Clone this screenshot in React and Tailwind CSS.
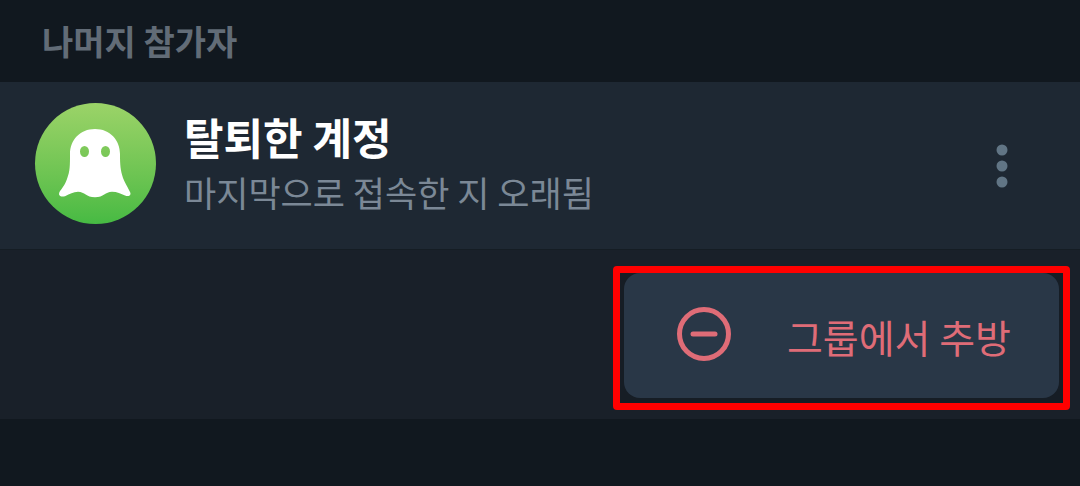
function GhostAvatar() {
  return (
    <div className="w-[121px] h-[121px] rounded-full flex items-center justify-center shrink-0 bg-linear-to-b from-[#9bd368] to-[#46ba43]">
      <svg viewBox="0 0 121 121" className="w-full h-full" aria-hidden="true">
        <path
          fill="#fff"
          fillRule="evenodd"
          d="M60 26C45 26 35 37 35 51C35 63 35 68 32 76C30 82 27 85 24.500 89C23 92.500 25.500 94.500 30 93.200C35 91 38 88.800 43 88.800C50 89 51 94.300 60 94.300C69 94.300 70 89 77 88.800C82 88.800 86 91 90 92.500C94.500 94 96.500 92 95 89C92 83 89.500 79 88 75C85.500 67 85 62 85 51C85 37 75 26 60 26ZM49.500 43A4.500 5.500 0 1 1 49.500 54A4.500 5.500 0 1 1 49.500 43ZM70.500 43A4.500 5.500 0 1 1 70.500 54A4.500 5.500 0 1 1 70.500 43Z"
        />
      </svg>
    </div>
  )
}

function MemberRow({ name, status }) {
  return (
    <li className="flex items-center h-[168px] pl-[35px] pr-[52px] pb-1 border-b border-[#151d24] bg-[#1e2833]">
      <GhostAvatar />
      <div className="flex-1 ml-7">
        <h3 className="text-[43px] leading-[56px] font-bold text-white">{name}</h3>
        <p className="text-[35px] leading-[56px] text-[#7b8896]">{status}</p>
      </div>
      <button type="button" aria-label="더 보기" className="px-5 py-4 shrink-0 text-[#617585]">
        <svg viewBox="0 0 12 44" className="w-3 h-11 mt-1" fill="currentColor" aria-hidden="true">
          <circle cx="6" cy="6" r="5.500" />
          <circle cx="6" cy="22" r="5.500" />
          <circle cx="6" cy="38" r="5.500" />
        </svg>
      </button>
    </li>
  )
}

function KickButton() {
  return (
    <div className="border-[7px] border-[#ff0000] rounded-sm px-1 pb-[5px] bg-[#161d25]">
      <button
        type="button"
        className="flex items-center h-[125px] pl-[52px] pr-12 pb-1 gap-[55px] rounded-2xl bg-[#293747] text-[#df6c77]"
      >
        <svg
          viewBox="0 0 56 56"
          className="w-14 h-14 shrink-0"
          fill="none"
          stroke="currentColor"
          strokeWidth="5"
          strokeLinecap="round"
          aria-hidden="true"
        >
          <circle cx="28" cy="28" r="24.500" />
          <path d="M17 28h22" />
        </svg>
        <span className="pt-1 text-[39px] leading-[58px] whitespace-nowrap">그룹에서 추방</span>
      </button>
    </div>
  )
}

export default function App() {
  return (
    <main className="min-h-screen bg-[#11181f] font-['Noto_Sans_CJK_KR',sans-serif]">
      <h2 className="h-[82px] pl-[42px] pt-4 text-[34px] leading-[50px] font-bold text-[#626c77]">
        나머지 참가자
      </h2>
      <ul>
        <MemberRow name="탈퇴한 계정" status="마지막으로 접속한 지 오래됨" />
        <li className="flex items-start justify-end h-[169px] pt-4 pr-[10px] bg-[#192029]">
          <KickButton />
        </li>
      </ul>
    </main>
  )
}
